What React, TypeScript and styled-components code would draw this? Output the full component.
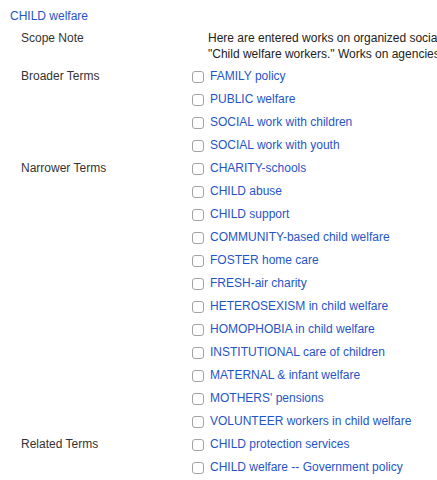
import React from "react";
import styled, { createGlobalStyle } from "styled-components";

const Global = createGlobalStyle`
  html, body {
    margin: 0;
    padding: 0;
    background: #ffffff;
    overflow: hidden;
  }
  body {
    font-family: "Liberation Sans", Arial, Helvetica, sans-serif;
    font-size: 12px;
    color: #333333;
  }
`;

const Page = styled.div`
  padding-top: 5px;
  width: 437px;
  overflow: hidden;
`;

const Title = styled.a`
  display: block;
  height: 23px;
  line-height: 23px;
  padding-left: 10px;
  color: #1f55c8;
  text-decoration: none;
`;

const Section = styled.div<{ $pad?: string }>`
  display: grid;
  grid-template-columns: 192px 1fr;
  padding: ${(p) => p.$pad ?? "0"};
`;

const Label = styled.div<{ $lh: number }>`
  padding-left: 21px;
  line-height: ${(p) => p.$lh}px;
  color: #333333;
  white-space: nowrap;
`;

const Note = styled.div`
  padding-left: 16px;
  line-height: 16px;
  white-space: nowrap;
  color: #222222;
  overflow: hidden;
`;

const TermList = styled.ul`
  list-style: none;
  margin: 0;
  padding: 0;
`;

const Term = styled.li`
  display: flex;
  align-items: center;
  height: 23px;
  gap: 6px;
  white-space: nowrap;
`;

const Box = styled.span`
  box-sizing: border-box;
  width: 12px;
  height: 12px;
  border: 1px solid #a3a3a3;
  border-radius: 3px;
  background: #ffffff;
  flex: none;
`;

const TermLink = styled.a`
  color: #1f55c8;
  text-decoration: none;
  line-height: 23px;
`;

const groups: { label: string; terms: string[] }[] = [
  {
    label: "Broader Terms",
    terms: ["FAMILY policy", "PUBLIC welfare", "SOCIAL work with children", "SOCIAL work with youth"],
  },
  {
    label: "Narrower Terms",
    terms: [
      "CHARITY-schools",
      "CHILD abuse",
      "CHILD support",
      "COMMUNITY-based child welfare",
      "FOSTER home care",
      "FRESH-air charity",
      "HETEROSEXISM in child welfare",
      "HOMOPHOBIA in child welfare",
      "INSTITUTIONAL care of children",
      "MATERNAL & infant welfare",
      "MOTHERS' pensions",
      "VOLUNTEER workers in child welfare",
    ],
  },
  {
    label: "Related Terms",
    terms: ["CHILD protection services", "CHILD welfare -- Government policy"],
  },
];

export default function App() {
  return (
    <Page>
      <Global />
      <Title href="#">CHILD welfare</Title>
      <Section $pad="2px 0 3px">
        <Label $lh={16}>Scope Note</Label>
        <Note>
          Here are entered works on organized social services for children. Works on
          <br />
          "Child welfare workers." Works on agencies and institutions are entered under
        </Note>
      </Section>
      {groups.map((g) => (
        <Section key={g.label}>
          <Label $lh={23}>{g.label}</Label>
          <TermList>
            {g.terms.map((t) => (
              <Term key={t}>
                <Box />
                <TermLink href="#">{t}</TermLink>
              </Term>
            ))}
          </TermList>
        </Section>
      ))}
    </Page>
  );
}
